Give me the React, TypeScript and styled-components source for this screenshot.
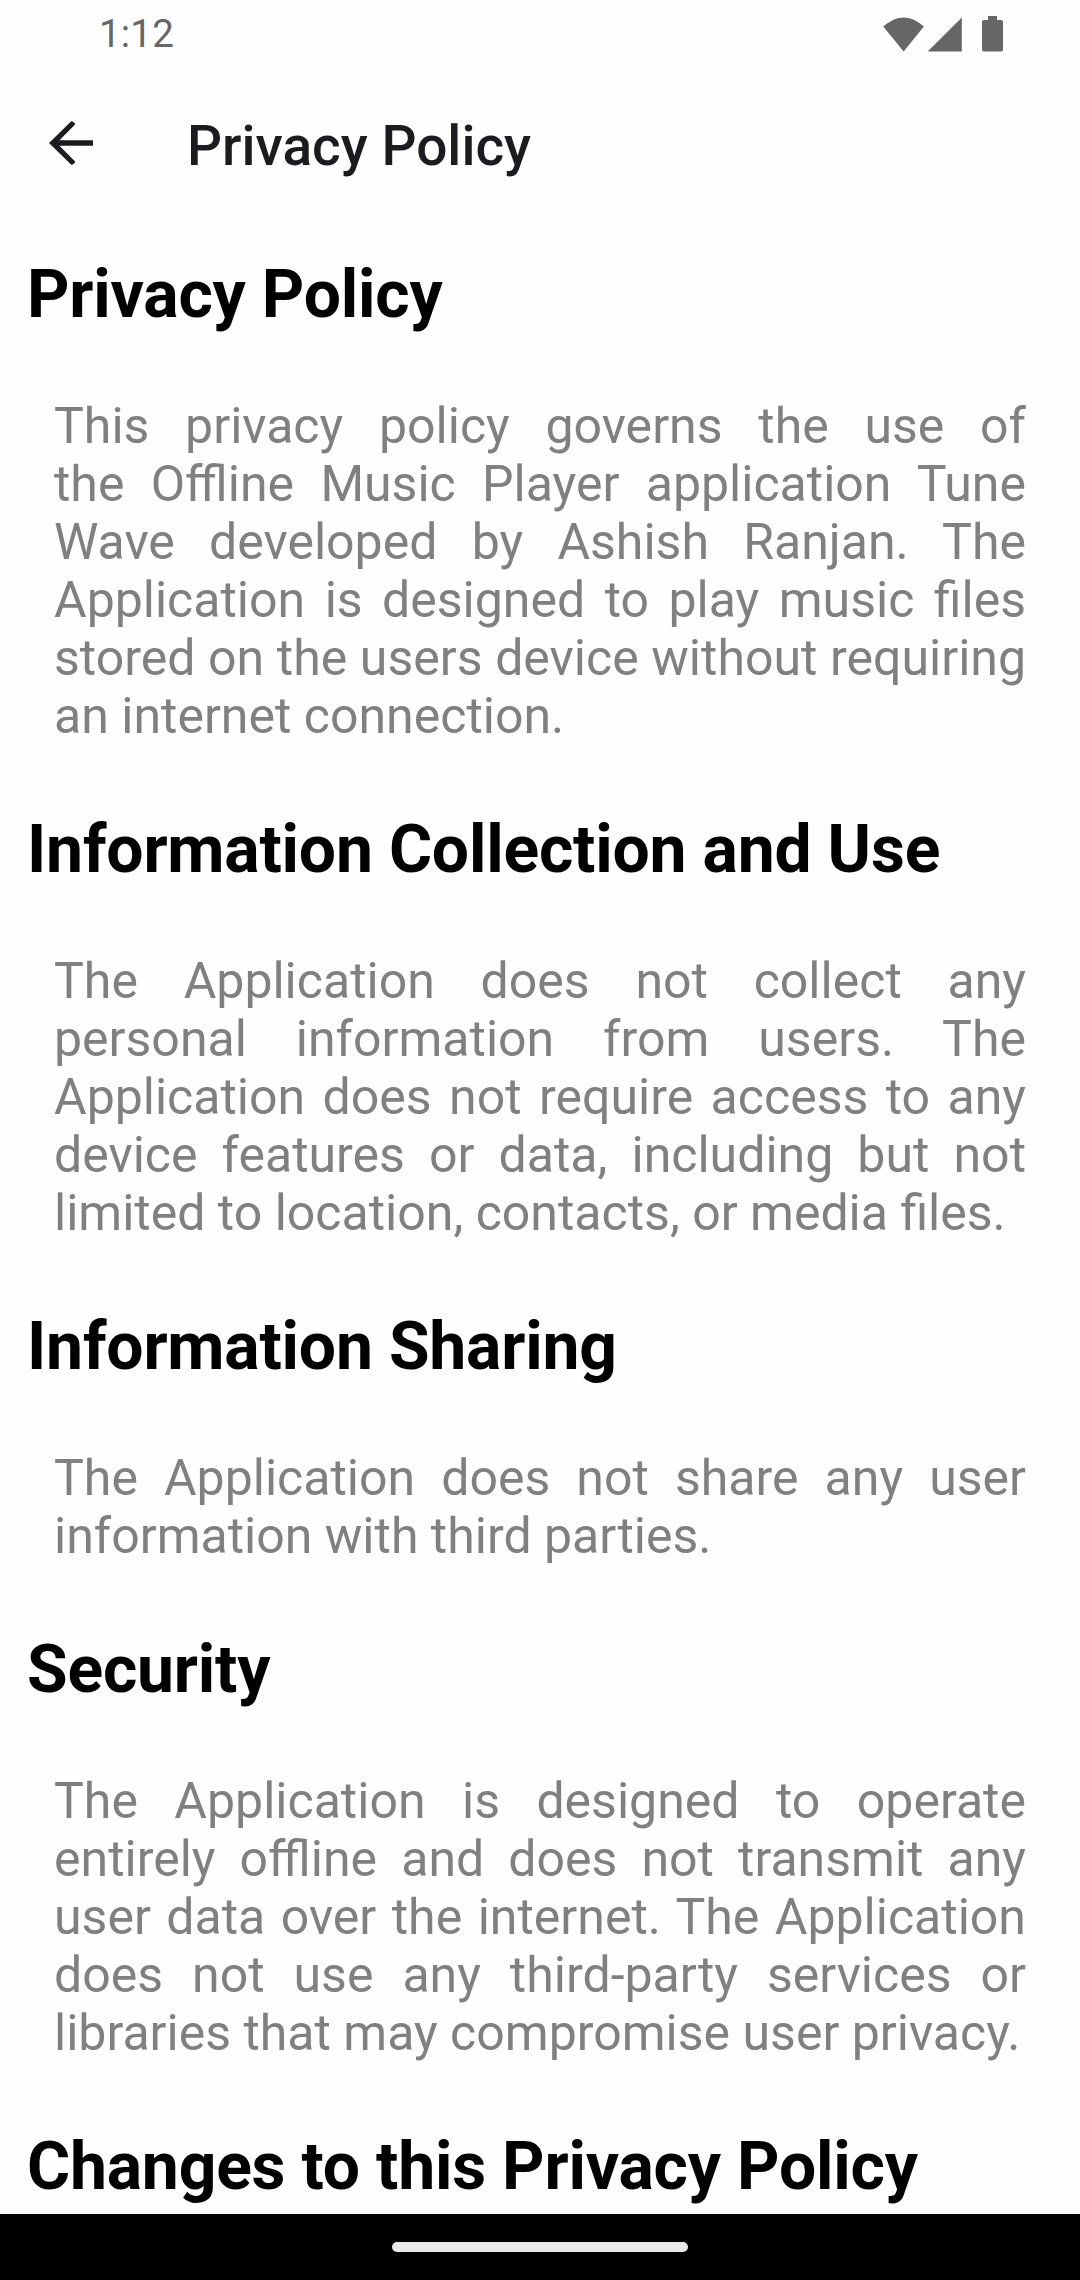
import React from "react";
import styled, { createGlobalStyle } from "styled-components";

const Global = createGlobalStyle`
  body { margin: 0; background: #fefefe; font-family: Roboto, sans-serif; }
`;
const Screen = styled.div`
  width: 1080px; height: 2280px; overflow: hidden;
  display: flex; flex-direction: column;
`;
const StatusBar = styled.div`
  height: 66px; flex: none; box-sizing: border-box; padding: 0 76px 0 99px;
  display: flex; justify-content: space-between;
`;
const Clock = styled.span`
  font-size: 38.5px; line-height: 68px; color: #666; letter-spacing: 0.2px;
`;
const StatusIcons = styled.svg`
  display: block; width: 124px; height: 66px;
`;
const AppBar = styled.header`
  height: 154px; flex: none; box-sizing: border-box; padding: 0 0 0 38px;
  display: flex; align-items: center; gap: 83px;
`;
const Back = styled.svg`
  width: 66px; height: 66px;
`;
const Title = styled.h1`
  margin: 6px 0 0; font-size: 55px; line-height: 64px; font-weight: 500; color: #1c1b1f;
`;
const Body = styled.main`
  flex: 1; min-height: 0; overflow: hidden; padding: 36px 27px 0;
  background: linear-gradient(#fbfbfb, #fefefe 10px);
`;
const Heading = styled.h2`
  margin: 0; font-size: 66px; line-height: 77px; font-weight: 700; color: #000;
  letter-spacing: -0.2px;
`;
const Paragraph = styled.p`
  margin: 0; padding: 64px 27px 66px; font-size: 50.03px; line-height: 58px; color: #808080;
`;
const Line = styled.span<{ $last?: boolean }>`
  display: block; white-space: nowrap;
  text-align-last: ${(p) => (p.$last ? "left" : "justify")};
`;
const NavBar = styled.footer`
  height: 66px; flex: none; background: #000; display: flex; align-items: center; justify-content: center;
`;
const Handle = styled.div`
  width: 296px; height: 10px; border-radius: 5px; background: #eaeaea;
`;

const sections = [
  { title: "Privacy Policy", lines: ["This privacy policy governs the use of", "the Offline Music Player application Tune", "Wave developed by Ashish Ranjan. The", "Application is designed to play music files", "stored on the users device without requiring", "an internet connection."] },
  { title: "Information Collection and Use", lines: ["The Application does not collect any", "personal information from users. The", "Application does not require access to any", "device features or data, including but not", "limited to location, contacts, or media files."] },
  { title: "Information Sharing", lines: ["The Application does not share any user", "information with third parties."] },
  { title: "Security", lines: ["The Application is designed to operate", "entirely offline and does not transmit any", "user data over the internet. The Application", "does not use any third-party services or", "libraries that may compromise user privacy."] },
  { title: "Changes to this Privacy Policy", lines: [] as string[] },
];

export default function App() {
  return (
    <Screen>
      <Global />
      <StatusBar>
        <Clock>1:12</Clock>
        <StatusIcons viewBox="880 0 124 66" fill="#666">
          <path d="M883.300 26.600Q903.600 8.200 923.900 26.600L903.600 51.500Z" />
          <path d="M961.800 17.500V51.600H927.700Z" />
          <path d="M988 16h9v4h4q2 0 2 2v27.500q0 2-2 2h-17q-2 0-2-2v-27.500q0-2 2-2h4z" />
        </StatusIcons>
      </StatusBar>
      <AppBar>
        <Back viewBox="0 0 24 24" fill="#1c1b1f">
          <path d="M20 11H7.800l5.600-5.600Q13.700 5.100 13.400 4.800L12.600 4.200Q12.300 3.900 12 4.200L4 12l8 7.800Q12.300 20.100 12.600 19.800L13.400 19.200Q13.700 18.900 13.400 18.600L7.800 13H20z" />
        </Back>
        <Title>Privacy Policy</Title>
      </AppBar>
      <Body>
        {sections.map((s) => (
          <section key={s.title}>
            <Heading>{s.title}</Heading>
            {s.lines.length > 0 && (
              <Paragraph>
                {s.lines.map((l, i) => (
                  <Line key={l} $last={i === s.lines.length - 1}>{l}</Line>
                ))}
              </Paragraph>
            )}
          </section>
        ))}
      </Body>
      <NavBar><Handle /></NavBar>
    </Screen>
  );
}
